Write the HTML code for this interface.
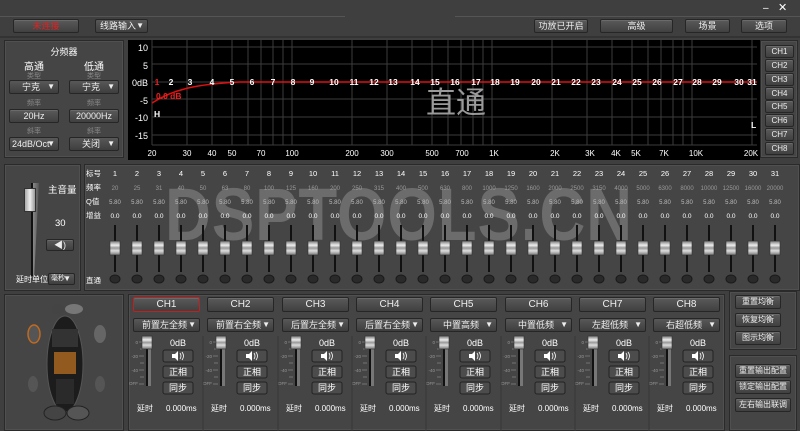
<!DOCTYPE html><html><head><meta charset="utf-8"><style>
*{margin:0;padding:0;box-sizing:border-box}
body{width:800px;height:431px;background:#3f3f3f;font-family:"Liberation Sans","Noto Sans CJK SC",sans-serif;color:#fff;position:relative;overflow:hidden;font-size:9px}
.a{position:absolute}
.btn{position:absolute;background:linear-gradient(#5a5a5a,#404040);border:1px solid #262626;border-radius:2px;color:#eee;text-align:center;font-size:9px;box-shadow:inset 0 1px 0 #6a6a6a}
.dd{position:absolute;background:linear-gradient(#585858,#3e3e3e);border:1px solid #262626;border-radius:2px;color:#eee;font-size:9px;padding-left:4px}
.dd:after{content:"▼";position:absolute;right:3px;top:0;font-size:8px}
.panel{position:absolute;border:1px solid #2a2a2a;background:#454545;box-shadow:inset 0 0 0 1px #505050}
.g{color:#8a8a8a;font-size:7px}
.c{position:absolute;text-align:center}
</style></head><body>
<div class="a" style="left:0;top:16px;width:345px;height:1px;background:#555"></div>
<div class="a" style="left:455px;top:16px;width:345px;height:1px;background:#555"></div>
<div class="a" style="left:763px;top:3px;font-size:10px">–</div>
<div class="a" style="left:778px;top:1px;font-size:11px">✕</div>
<div class="btn" style="left:13px;top:19px;width:66px;height:14px;line-height:12px;color:#e02020">未连接</div>
<div class="dd" style="left:95px;top:19px;width:53px;height:14px;line-height:12px">线路输入</div>
<div class="btn" style="left:534px;top:19px;width:54px;height:14px;line-height:12px">功放已开启</div>
<div class="btn" style="left:600px;top:19px;width:73px;height:14px;line-height:12px">高级</div>
<div class="btn" style="left:685px;top:19px;width:45px;height:14px;line-height:12px">场景</div>
<div class="btn" style="left:741px;top:19px;width:46px;height:14px;line-height:12px">选项</div>
<div class="a" style="left:0;top:36px;width:800px;height:2px;background:#333"></div>

<div class="panel" style="left:4px;top:40px;width:120px;height:118px"></div>
<div class="c" style="left:4px;top:45px;width:120px">分频器</div>
<div class="c" style="left:8px;top:58px;width:52px;font-size:10px">高通</div>
<div class="c" style="left:68px;top:58px;width:52px;font-size:10px">低通</div>
<div class="c g" style="left:8px;top:71px;width:52px">类型</div>
<div class="c g" style="left:68px;top:71px;width:52px">类型</div>
<div class="dd" style="left:9px;top:80px;width:50px;height:14px;line-height:12px;padding-left:12px">宁克</div>
<div class="dd" style="left:69px;top:80px;width:50px;height:14px;line-height:12px;padding-left:12px">宁克</div>
<div class="c g" style="left:8px;top:98px;width:52px">频率</div>
<div class="c g" style="left:68px;top:98px;width:52px">频率</div>
<div class="btn" style="left:9px;top:109px;width:50px;height:14px;line-height:12px">20Hz</div>
<div class="btn" style="left:69px;top:109px;width:50px;height:14px;line-height:12px">20000Hz</div>
<div class="c g" style="left:8px;top:126px;width:52px">斜率</div>
<div class="c g" style="left:68px;top:126px;width:52px">斜率</div>
<div class="dd" style="left:9px;top:137px;width:50px;height:14px;line-height:12px;padding-left:2px">24dB/Oct</div>
<div class="dd" style="left:69px;top:137px;width:50px;height:14px;line-height:12px;padding-left:12px">关闭</div>

<svg class="a" style="left:128px;top:40px" width="632" height="120" viewBox="128 40 632 120">
<rect x="128" y="40" width="632" height="120" fill="#000"/>
<g stroke="#3c3c3c" stroke-width="1">
<line x1="152" y1="47" x2="757" y2="47"/><line x1="152" y1="64" x2="757" y2="64"/><line x1="152" y1="82" x2="757" y2="82"/><line x1="152" y1="99" x2="757" y2="99"/><line x1="152" y1="117" x2="757" y2="117"/><line x1="152" y1="135" x2="757" y2="135"/><line x1="152" y1="145" x2="757" y2="145"/>
<line x1="152" y1="40" x2="152" y2="145"/><line x1="187" y1="40" x2="187" y2="145"/><line x1="212" y1="40" x2="212" y2="145"/><line x1="232" y1="40" x2="232" y2="145"/><line x1="248" y1="40" x2="248" y2="145"/><line x1="261" y1="40" x2="261" y2="145"/><line x1="273" y1="40" x2="273" y2="145"/><line x1="283" y1="40" x2="283" y2="145"/><line x1="292" y1="40" x2="292" y2="145"/><line x1="352" y1="40" x2="352" y2="145"/><line x1="387" y1="40" x2="387" y2="145"/><line x1="412" y1="40" x2="412" y2="145"/><line x1="432" y1="40" x2="432" y2="145"/><line x1="448" y1="40" x2="448" y2="145"/><line x1="461" y1="40" x2="461" y2="145"/><line x1="473" y1="40" x2="473" y2="145"/><line x1="483" y1="40" x2="483" y2="145"/><line x1="492" y1="40" x2="492" y2="145"/><line x1="552" y1="40" x2="552" y2="145"/><line x1="587" y1="40" x2="587" y2="145"/><line x1="612" y1="40" x2="612" y2="145"/><line x1="632" y1="40" x2="632" y2="145"/><line x1="648" y1="40" x2="648" y2="145"/><line x1="661" y1="40" x2="661" y2="145"/><line x1="673" y1="40" x2="673" y2="145"/><line x1="683" y1="40" x2="683" y2="145"/><line x1="692" y1="40" x2="692" y2="145"/><line x1="752" y1="40" x2="752" y2="145"/>
</g>
<g fill="#fff" font-size="9" text-anchor="end"><text x="148" y="51">10</text><text x="148" y="69">5</text><text x="148" y="86">0dB</text><text x="148" y="104">-5</text><text x="148" y="121">-10</text><text x="148" y="139">-15</text></g>
<g fill="#fff" font-size="8" text-anchor="middle"><text x="152" y="156">20</text><text x="187" y="156">30</text><text x="212" y="156">40</text><text x="232" y="156">50</text><text x="261" y="156">70</text><text x="292" y="156">100</text><text x="352" y="156">200</text><text x="387" y="156">300</text><text x="432" y="156">500</text><text x="462" y="156">700</text><text x="494" y="156">1K</text><text x="555" y="156">2K</text><text x="590" y="156">3K</text><text x="616" y="156">4K</text><text x="636" y="156">5K</text><text x="664" y="156">7K</text><text x="696" y="156">10K</text><text x="751" y="156">20K</text></g>
<text x="456" y="113" fill="#9a9a9a" font-size="30" text-anchor="middle">直通</text>
<path d="M152,103 C172,90 195,84 240,82 L757,82" stroke="#e01010" stroke-width="1.5" fill="none"/>
<g font-size="8.5" font-weight="bold" text-anchor="middle" fill="#fff"><text x="157" y="85" fill="#f02020">1</text><text x="171" y="85">2</text><text x="190" y="85">3</text><text x="212" y="85">4</text><text x="232" y="85">5</text><text x="252" y="85">6</text><text x="273" y="85">7</text><text x="293" y="85">8</text><text x="312" y="85">9</text><text x="334" y="85">10</text><text x="354" y="85">11</text><text x="374" y="85">12</text><text x="393" y="85">13</text><text x="415" y="85">14</text><text x="435" y="85">15</text><text x="455" y="85">16</text><text x="476" y="85">17</text><text x="495" y="85">18</text><text x="515" y="85">19</text><text x="536" y="85">20</text><text x="556" y="85">21</text><text x="576" y="85">22</text><text x="596" y="85">23</text><text x="617" y="85">24</text><text x="637" y="85">25</text><text x="657" y="85">26</text><text x="678" y="85">27</text><text x="697" y="85">28</text><text x="717" y="85">29</text><text x="739" y="85">30</text><text x="752" y="85">31</text></g>
<text x="156" y="99" fill="#f02020" font-size="8.5" font-weight="bold">0.0 dB</text>
<text x="154" y="117" fill="#fff" font-size="8.5" font-weight="bold">H</text>
<text x="751" y="128" fill="#fff" font-size="8.5" font-weight="bold">L</text>
</svg>
<div class="panel" style="left:760px;top:40px;width:38px;height:118px"></div>
<div class="btn" style="left:765px;top:45px;width:29px;height:13px;line-height:11px;font-size:8px">CH1</div>
<div class="btn" style="left:765px;top:59px;width:29px;height:13px;line-height:11px;font-size:8px">CH2</div>
<div class="btn" style="left:765px;top:73px;width:29px;height:13px;line-height:11px;font-size:8px">CH3</div>
<div class="btn" style="left:765px;top:87px;width:29px;height:13px;line-height:11px;font-size:8px">CH4</div>
<div class="btn" style="left:765px;top:100px;width:29px;height:13px;line-height:11px;font-size:8px">CH5</div>
<div class="btn" style="left:765px;top:114px;width:29px;height:13px;line-height:11px;font-size:8px">CH6</div>
<div class="btn" style="left:765px;top:128px;width:29px;height:13px;line-height:11px;font-size:8px">CH7</div>
<div class="btn" style="left:765px;top:142px;width:29px;height:13px;line-height:11px;font-size:8px">CH8</div>

<div class="panel" style="left:4px;top:164px;width:77px;height:127px"></div>
<div class="a" style="left:31px;top:183px;width:2px;height:93px;background:#111"></div>
<div class="a" style="left:33px;top:183px;width:6px;height:93px;background:linear-gradient(90deg,#888,#555);clip-path:polygon(0 0,100% 0,20% 100%,0 100%)"></div>
<div class="a" style="left:24px;top:188px;width:12px;height:24px;background:linear-gradient(90deg,#aaa,#eee,#999);border:1px solid #333"></div>
<div class="a" style="left:48px;top:182px;font-size:9.5px">主音量</div>
<div class="a" style="left:55px;top:218px;font-size:9.5px">30</div>
<div class="btn" style="left:46px;top:239px;width:28px;height:12px;line-height:10px">◀)</div>
<div class="a" style="left:16px;top:274px;font-size:8px">延时单位</div>
<div class="dd" style="left:48px;top:273px;width:27px;height:12px;line-height:10px;font-size:7px;padding-left:2px">毫秒</div>

<div class="panel" style="left:84px;top:164px;width:716px;height:127px"></div>
<div class="a" style="left:165px;top:178px;font-size:74px;font-weight:bold;color:rgba(140,140,140,.55);letter-spacing:1px;line-height:74px;font-family:'Liberation Sans',sans-serif;transform:scaleX(.86);transform-origin:0 0;white-space:nowrap">DSPTOOLS.CN</div>
<svg class="a" style="left:84px;top:164px" width="716" height="127" viewBox="84 164 716 127">
<g font-size="7.5" fill="#fff"><text x="86" y="176">标号</text><text x="86" y="190">频率</text><text x="86" y="204">Q值</text><text x="86" y="218">增益</text><text x="86" y="283">直通</text></g>
<g font-size="7.5" fill="#fff" text-anchor="middle"><text x="115" y="176">1</text><text x="137" y="176">2</text><text x="159" y="176">3</text><text x="181" y="176">4</text><text x="203" y="176">5</text><text x="225" y="176">6</text><text x="247" y="176">7</text><text x="269" y="176">8</text><text x="291" y="176">9</text><text x="313" y="176">10</text><text x="335" y="176">11</text><text x="357" y="176">12</text><text x="379" y="176">13</text><text x="401" y="176">14</text><text x="423" y="176">15</text><text x="445" y="176">16</text><text x="467" y="176">17</text><text x="489" y="176">18</text><text x="511" y="176">19</text><text x="533" y="176">20</text><text x="555" y="176">21</text><text x="577" y="176">22</text><text x="599" y="176">23</text><text x="621" y="176">24</text><text x="643" y="176">25</text><text x="665" y="176">26</text><text x="687" y="176">27</text><text x="709" y="176">28</text><text x="731" y="176">29</text><text x="753" y="176">30</text><text x="775" y="176">31</text></g>
<g font-size="6" fill="#999" text-anchor="middle"><text x="115" y="190">20</text><text x="137" y="190">25</text><text x="159" y="190">31</text><text x="181" y="190">40</text><text x="203" y="190">50</text><text x="225" y="190">63</text><text x="247" y="190">80</text><text x="269" y="190">100</text><text x="291" y="190">125</text><text x="313" y="190">160</text><text x="335" y="190">200</text><text x="357" y="190">250</text><text x="379" y="190">315</text><text x="401" y="190">400</text><text x="423" y="190">500</text><text x="445" y="190">630</text><text x="467" y="190">800</text><text x="489" y="190">1000</text><text x="511" y="190">1250</text><text x="533" y="190">1600</text><text x="555" y="190">2000</text><text x="577" y="190">2500</text><text x="599" y="190">3150</text><text x="621" y="190">4000</text><text x="643" y="190">5000</text><text x="665" y="190">6300</text><text x="687" y="190">8000</text><text x="709" y="190">10000</text><text x="731" y="190">12500</text><text x="753" y="190">16000</text><text x="775" y="190">20000</text></g>
<g font-size="6" fill="#bbb" text-anchor="middle"><text x="115" y="204">5.80</text><text x="137" y="204">5.80</text><text x="159" y="204">5.80</text><text x="181" y="204">5.80</text><text x="203" y="204">5.80</text><text x="225" y="204">5.80</text><text x="247" y="204">5.80</text><text x="269" y="204">5.80</text><text x="291" y="204">5.80</text><text x="313" y="204">5.80</text><text x="335" y="204">5.80</text><text x="357" y="204">5.80</text><text x="379" y="204">5.80</text><text x="401" y="204">5.80</text><text x="423" y="204">5.80</text><text x="445" y="204">5.80</text><text x="467" y="204">5.80</text><text x="489" y="204">5.80</text><text x="511" y="204">5.80</text><text x="533" y="204">5.80</text><text x="555" y="204">5.80</text><text x="577" y="204">5.80</text><text x="599" y="204">5.80</text><text x="621" y="204">5.80</text><text x="643" y="204">5.80</text><text x="665" y="204">5.80</text><text x="687" y="204">5.80</text><text x="709" y="204">5.80</text><text x="731" y="204">5.80</text><text x="753" y="204">5.80</text><text x="775" y="204">5.80</text></g>
<g font-size="6.5" fill="#fff" text-anchor="middle"><text x="115" y="218">0.0</text><text x="137" y="218">0.0</text><text x="159" y="218">0.0</text><text x="181" y="218">0.0</text><text x="203" y="218">0.0</text><text x="225" y="218">0.0</text><text x="247" y="218">0.0</text><text x="269" y="218">0.0</text><text x="291" y="218">0.0</text><text x="313" y="218">0.0</text><text x="335" y="218">0.0</text><text x="357" y="218">0.0</text><text x="379" y="218">0.0</text><text x="401" y="218">0.0</text><text x="423" y="218">0.0</text><text x="445" y="218">0.0</text><text x="467" y="218">0.0</text><text x="489" y="218">0.0</text><text x="511" y="218">0.0</text><text x="533" y="218">0.0</text><text x="555" y="218">0.0</text><text x="577" y="218">0.0</text><text x="599" y="218">0.0</text><text x="621" y="218">0.0</text><text x="643" y="218">0.0</text><text x="665" y="218">0.0</text><text x="687" y="218">0.0</text><text x="709" y="218">0.0</text><text x="731" y="218">0.0</text><text x="753" y="218">0.0</text><text x="775" y="218">0.0</text></g>
<defs><linearGradient id="th" x1="0" x2="0" y1="0" y2="1"><stop offset="0" stop-color="#777"/><stop offset=".3" stop-color="#eee"/><stop offset=".5" stop-color="#999"/><stop offset=".7" stop-color="#ddd"/><stop offset="1" stop-color="#777"/></linearGradient>
<g id="s"><rect x="-1" y="-23" width="2" height="47" fill="#111"/><rect x="-5" y="-7" width="10" height="14" fill="url(#th)" stroke="#333" stroke-width=".6"/><ellipse cx="0" cy="31" rx="5" ry="4" fill="#2a2a2a" stroke="#1a1a1a"/></g></defs>
<use href="#s" x="115" y="248"/><use href="#s" x="137" y="248"/><use href="#s" x="159" y="248"/><use href="#s" x="181" y="248"/><use href="#s" x="203" y="248"/><use href="#s" x="225" y="248"/><use href="#s" x="247" y="248"/><use href="#s" x="269" y="248"/><use href="#s" x="291" y="248"/><use href="#s" x="313" y="248"/><use href="#s" x="335" y="248"/><use href="#s" x="357" y="248"/><use href="#s" x="379" y="248"/><use href="#s" x="401" y="248"/><use href="#s" x="423" y="248"/><use href="#s" x="445" y="248"/><use href="#s" x="467" y="248"/><use href="#s" x="489" y="248"/><use href="#s" x="511" y="248"/><use href="#s" x="533" y="248"/><use href="#s" x="555" y="248"/><use href="#s" x="577" y="248"/><use href="#s" x="599" y="248"/><use href="#s" x="621" y="248"/><use href="#s" x="643" y="248"/><use href="#s" x="665" y="248"/><use href="#s" x="687" y="248"/><use href="#s" x="709" y="248"/><use href="#s" x="731" y="248"/><use href="#s" x="753" y="248"/><use href="#s" x="775" y="248"/>
</svg>

<div class="panel" style="left:4px;top:294px;width:120px;height:137px"></div>
<svg class="a" style="left:4px;top:294px" width="120" height="137">
<ellipse cx="61" cy="70" rx="18" ry="48" fill="#1c1c1c" stroke="#555"/>
<rect x="50" y="58" width="22" height="22" fill="#b06a20" opacity=".8"/>
<rect x="48" y="35" width="26" height="18" fill="#333"/>
<rect x="52" y="85" width="18" height="25" fill="#2a2a2a"/>
<ellipse cx="30" cy="40" rx="6" ry="9" fill="#555" stroke="#c06a20" stroke-width="1.5"/>
<ellipse cx="96" cy="40" rx="6" ry="9" fill="#666"/>
<ellipse cx="29" cy="90" rx="5" ry="8" fill="#555"/>
<ellipse cx="96" cy="90" rx="5" ry="8" fill="#555"/>
<ellipse cx="54" cy="15" rx="6" ry="5" fill="#444"/><ellipse cx="70" cy="15" rx="9" ry="5" fill="#777"/>
<ellipse cx="51" cy="119" rx="11" ry="7" fill="#444" stroke="#222"/><ellipse cx="74" cy="119" rx="11" ry="7" fill="#555" stroke="#222"/>
</svg>

<div class="panel" style="left:128px;top:294px;width:597px;height:137px"></div>
<div class="btn" style="left:133px;top:297px;width:67px;height:15px;line-height:13px;font-size:10px;border-color:#c02020">CH1</div>
<div class="btn" style="left:207px;top:297px;width:67px;height:15px;line-height:13px;font-size:10px">CH2</div>
<div class="btn" style="left:282px;top:297px;width:67px;height:15px;line-height:13px;font-size:10px">CH3</div>
<div class="btn" style="left:356px;top:297px;width:67px;height:15px;line-height:13px;font-size:10px">CH4</div>
<div class="btn" style="left:430px;top:297px;width:67px;height:15px;line-height:13px;font-size:10px">CH5</div>
<div class="btn" style="left:505px;top:297px;width:67px;height:15px;line-height:13px;font-size:10px">CH6</div>
<div class="btn" style="left:579px;top:297px;width:67px;height:15px;line-height:13px;font-size:10px">CH7</div>
<div class="btn" style="left:653px;top:297px;width:67px;height:15px;line-height:13px;font-size:10px">CH8</div>
<div class="dd" style="left:133px;top:318px;width:67px;height:14px;line-height:12px;padding-left:8px">前置左全频</div>
<div class="dd" style="left:207px;top:318px;width:67px;height:14px;line-height:12px;padding-left:8px">前置右全频</div>
<div class="dd" style="left:282px;top:318px;width:67px;height:14px;line-height:12px;padding-left:8px">后置左全频</div>
<div class="dd" style="left:356px;top:318px;width:67px;height:14px;line-height:12px;padding-left:8px">后置右全频</div>
<div class="dd" style="left:430px;top:318px;width:67px;height:14px;line-height:12px;padding-left:12px">中置高频</div>
<div class="dd" style="left:505px;top:318px;width:67px;height:14px;line-height:12px;padding-left:12px">中置低频</div>
<div class="dd" style="left:579px;top:318px;width:67px;height:14px;line-height:12px;padding-left:12px">左超低频</div>
<div class="dd" style="left:653px;top:318px;width:67px;height:14px;line-height:12px;padding-left:12px">右超低频</div>
<svg class="a" style="left:128px;top:294px" width="597" height="137" viewBox="128 294 597 137">
<defs><linearGradient id="th2" x1="0" x2="0" y1="0" y2="1"><stop offset="0" stop-color="#777"/><stop offset=".3" stop-color="#eee"/><stop offset=".5" stop-color="#999"/><stop offset=".7" stop-color="#ddd"/><stop offset="1" stop-color="#777"/></linearGradient>
<g id="st">
<text x="10" y="50" font-size="4.5" fill="#999" text-anchor="end">0</text><text x="10" y="64" font-size="4.5" fill="#999" text-anchor="end">-20</text><text x="10" y="78" font-size="4.5" fill="#999" text-anchor="end">-40</text><text x="10" y="91" font-size="4.5" fill="#999" text-anchor="end">OFF</text>
<g stroke="#888" stroke-width=".7"><line x1="11" y1="48" x2="16" y2="48"/><line x1="12" y1="55" x2="16" y2="55"/><line x1="11" y1="62" x2="16" y2="62"/><line x1="12" y1="69" x2="16" y2="69"/><line x1="11" y1="76" x2="16" y2="76"/><line x1="12" y1="83" x2="16" y2="83"/><line x1="11" y1="90" x2="16" y2="90"/></g>
<rect x="18" y="44" width="2" height="48" fill="#111"/><rect x="20" y="44" width="3" height="48" fill="#777"/>
<rect x="14" y="42" width="10" height="13" fill="url(#th2)" stroke="#333" stroke-width=".6"/>
<text x="50" y="52" font-size="9" fill="#fff" text-anchor="middle">0dB</text>
<g stroke="#222"><rect x="35" y="56" width="30" height="12" rx="2" fill="#4c4c4c"/><rect x="35" y="72" width="30" height="12" rx="2" fill="#4c4c4c"/><rect x="35" y="88" width="30" height="12" rx="2" fill="#4c4c4c"/></g>
<path d="M44,60h3l3,-3v10l-3,-3h-3z" fill="#fff"/><path d="M52,59q2,3 0,6M54,58q3,4 0,8" stroke="#fff" fill="none" stroke-width=".8"/>
<text x="50" y="81" font-size="9" fill="#fff" text-anchor="middle">正相</text>
<text x="50" y="97" font-size="9" fill="#fff" text-anchor="middle">同步</text>
<text x="9" y="117" font-size="8" fill="#fff">延时</text><text x="38" y="117" font-size="8" fill="#fff">0.000ms</text>
</g></defs>
<use href="#st" x="128" y="294"/><use href="#st" x="202" y="294"/><use href="#st" x="277" y="294"/><use href="#st" x="351" y="294"/><use href="#st" x="425" y="294"/><use href="#st" x="500" y="294"/><use href="#st" x="574" y="294"/><use href="#st" x="648" y="294"/>
<g stroke="#383838"><line x1="203" y1="336" x2="203" y2="431"/><line x1="278" y1="336" x2="278" y2="431"/><line x1="352" y1="336" x2="352" y2="431"/><line x1="426" y1="336" x2="426" y2="431"/><line x1="501" y1="336" x2="501" y2="431"/><line x1="575" y1="336" x2="575" y2="431"/><line x1="649" y1="336" x2="649" y2="431"/></g>
</svg>

<div class="panel" style="left:729px;top:291px;width:68px;height:59px"></div>
<div class="btn" style="left:735px;top:295px;width:46px;height:14px;line-height:12px;font-size:8px">重置均衡</div>
<div class="btn" style="left:735px;top:313px;width:46px;height:14px;line-height:12px;font-size:8px">恢复均衡</div>
<div class="btn" style="left:735px;top:331px;width:46px;height:14px;line-height:12px;font-size:8px">图示均衡</div>
<div class="panel" style="left:729px;top:355px;width:68px;height:76px"></div>
<div class="btn" style="left:735px;top:364px;width:56px;height:14px;line-height:12px;font-size:8px">重置输出配置</div>
<div class="btn" style="left:735px;top:380px;width:56px;height:14px;line-height:12px;font-size:8px">锁定输出配置</div>
<div class="btn" style="left:735px;top:398px;width:56px;height:14px;line-height:12px;font-size:8px">左右输出联调</div>
</body></html>
